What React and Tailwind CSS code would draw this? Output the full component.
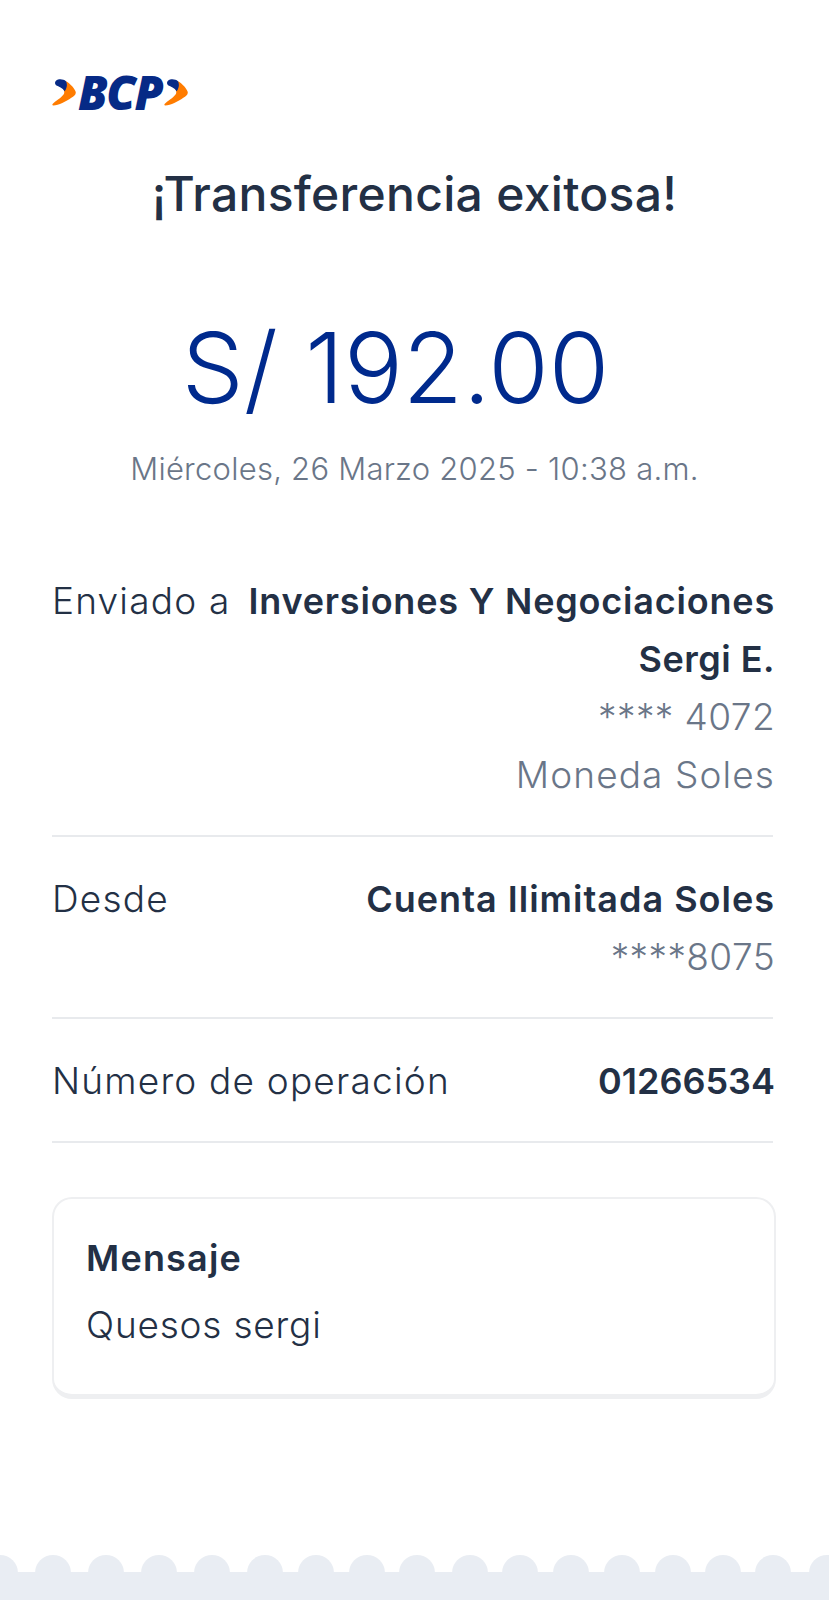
const bumps = [0, 53, 106, 159, 212, 265, 316, 367, 417, 470, 520, 571, 622, 673, 723, 773, 827]

function Chevron({ className }) {
  return (
    <svg viewBox="0 0 72 80" className={className}>
      <path d="M42 6 C56 14 68 28 71 38 C73 46 66 51 58 56 C42 68 20 78 4 79 C0 79 0 75 4 72 C18 62 32 52 36 44 C38 38 36 30 30 24 Z" fill="#ff7c00" />
      <path d="M12 5 C20 -2 34 0 42 6 C46 14 46 26 38 36 C32 26 20 22 12 18 C8 14 8 9 12 5 Z" fill="#062a86" />
    </svg>
  )
}

function Logo() {
  return (
    <div className="flex items-center h-[36px]">
      <Chevron className="w-[24px] h-[27px]" />
      <span className="font-['Open_Sans',sans-serif] italic font-extrabold text-[47px] leading-none tracking-[-1.5px] text-[#062a86] ml-[2px]">
        BCP
      </span>
      <Chevron className="w-[24px] h-[27px] ml-[2px]" />
    </div>
  )
}

function Row({ label, children, className }) {
  return (
    <div className={`mr-[4px] flex justify-between gap-[8px] border-b-2 border-[#e8eaed] ${className}`}>
      <div className="text-[37px] leading-[58px] font-light tracking-[1.2px] text-[#233045] whitespace-nowrap">{label}</div>
      <div className="-mr-[2px] text-right text-[36px] leading-[58px] whitespace-nowrap">{children}</div>
    </div>
  )
}

export default function App() {
  return (
    <div className="relative h-[1600px] w-[829px] overflow-hidden bg-white font-['Inter',sans-serif] text-[#233045]">
      <div className="px-[52px] pt-[74px]">
        <Logo />
        <h1 className="mt-[50px] text-center text-[48px] leading-[68px] font-medium tracking-[0.3px]">¡Transferencia exitosa!</h1>
        <div className="mt-[80px] pr-[38px] text-center text-[98px] leading-[120px] font-light text-[#002a8d]">S/ 192.00</div>
        <div className="mt-[18px] text-center text-[31px] leading-[46px] font-light tracking-[0.25px] text-[#6a7688]">
          Miércoles, 26 Marzo 2025 - 10:38 a.m.
        </div>

        <Row label="Enviado a" className="mt-[80px] pb-[31px]">
          <div className="font-semibold tracking-[0.8px]">Inversiones Y Negociaciones</div>
          <div className="font-semibold tracking-[0.5px]">Sergi E.</div>
          <div className="text-[37px] font-light tracking-[0.4px] text-[#6a7688]">**** 4072</div>
          <div className="text-[37px] font-light tracking-[1.1px] text-[#6a7688]">Moneda Soles</div>
        </Row>
        <Row label="Desde" className="pt-[33px] pb-[31px]">
          <div className="font-semibold tracking-[1px]">Cuenta Ilimitada Soles</div>
          <div className="text-[37px] font-light tracking-[0.4px] text-[#6a7688]">****8075</div>
        </Row>
        <Row label="Número de operación" className="pt-[33px] pb-[31px]">
          <div className="font-semibold">01266534</div>
        </Row>

        <div className="mt-[54px] h-[202px] w-[724px] rounded-[20px] border-2 border-[#eeeff1] border-b-[5px] px-[32px] pt-[29px]">
          <div className="text-[36px] leading-[60px] font-semibold tracking-[1.2px]">Mensaje</div>
          <div className="mt-[7px] text-[37px] leading-[60px] font-light tracking-[0.8px]">Quesos sergi</div>
        </div>
      </div>

      <svg className="absolute left-0 bottom-0 h-[45px] w-[829px]" viewBox="0 0 829 45">
        <rect x="0" y="17" width="829" height="28" fill="#e9edf3" />
        {bumps.map((x) => (
          <circle key={x} cx={x} cy="18" r="18" fill="#e9edf3" />
        ))}
      </svg>
    </div>
  )
}
